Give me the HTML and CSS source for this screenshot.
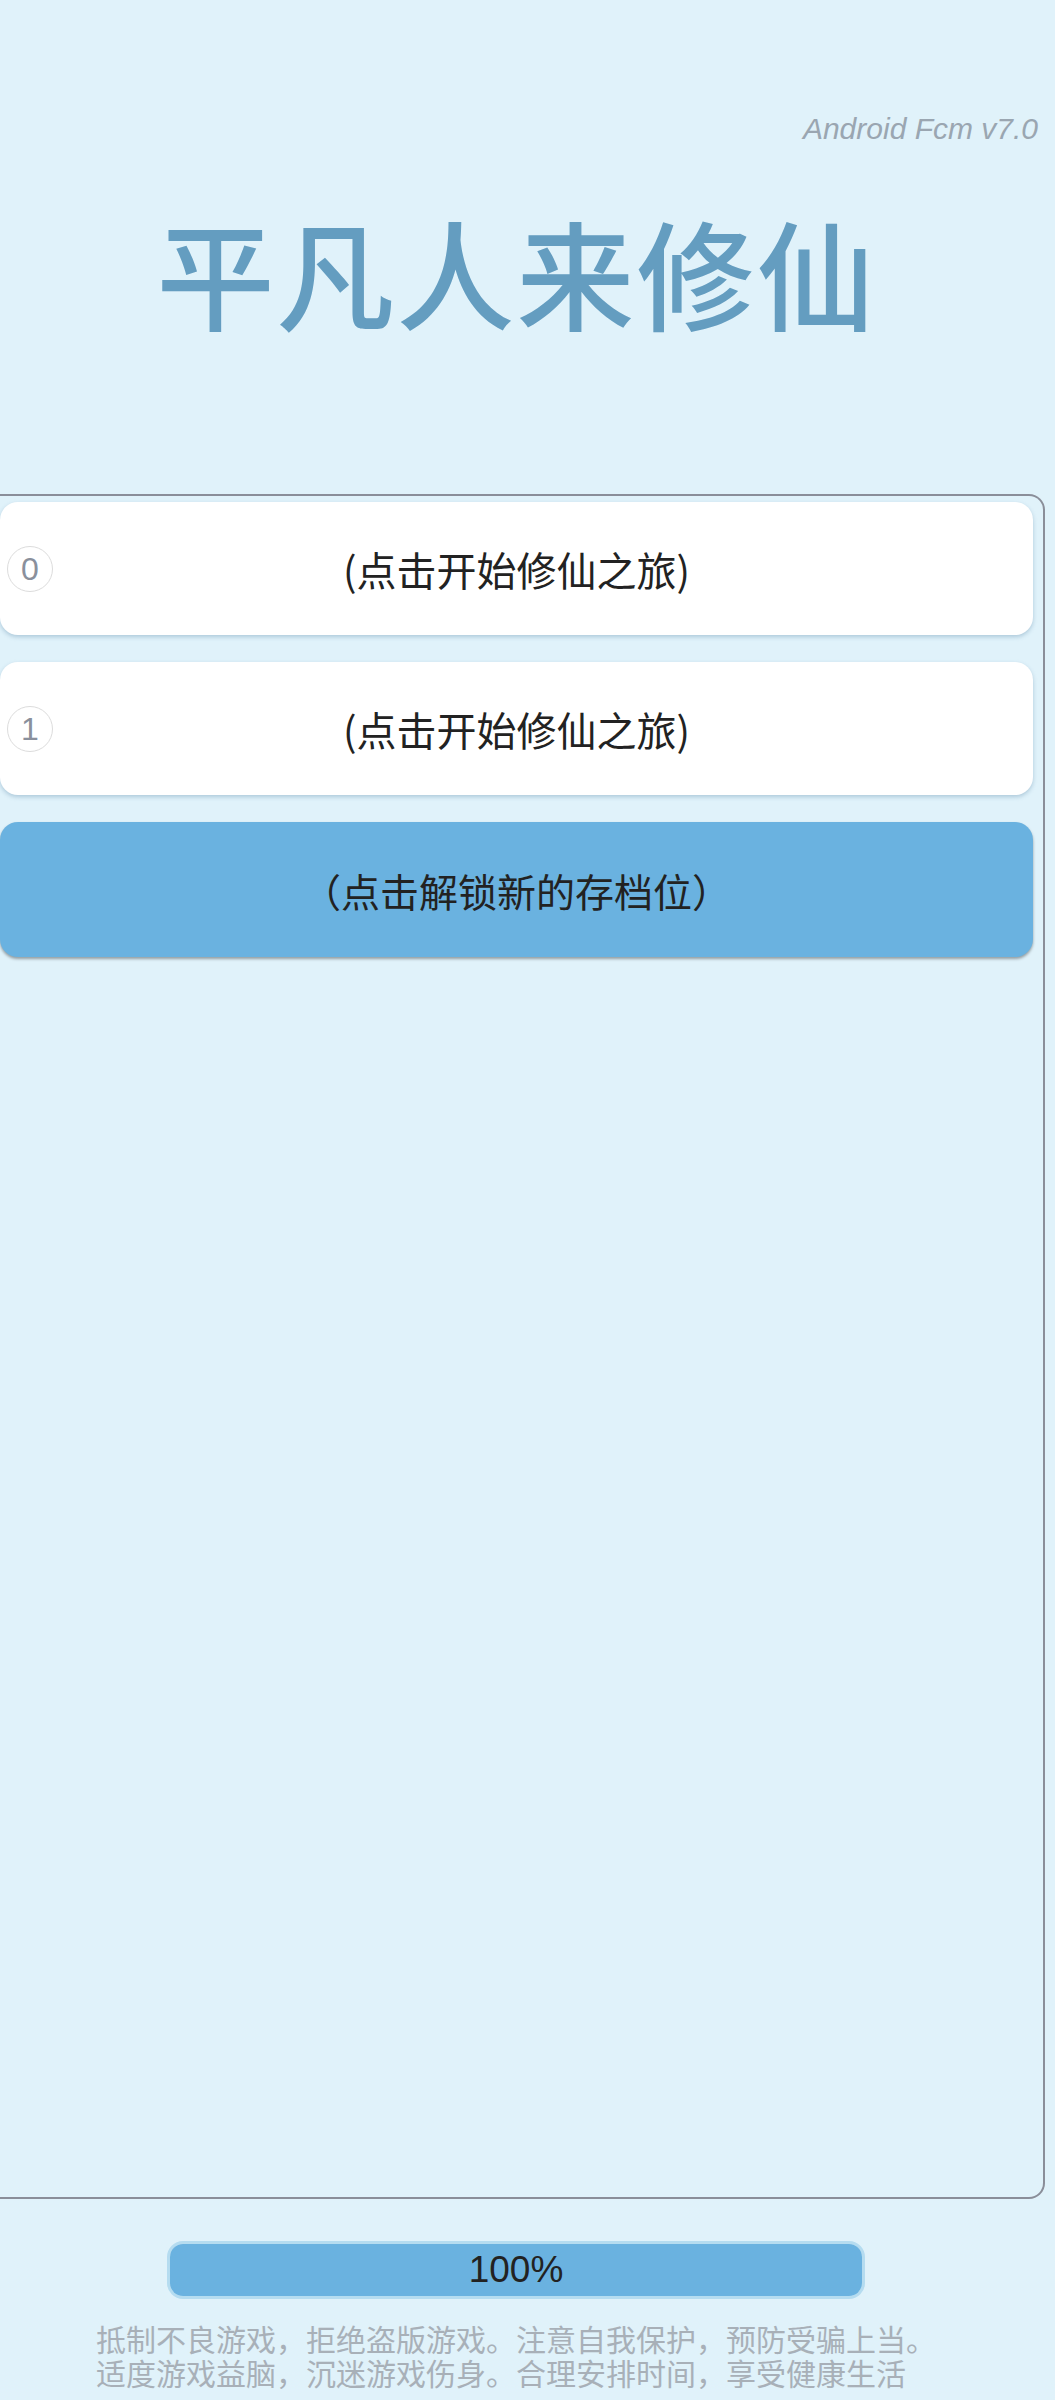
FILE: index.html
```html
<!DOCTYPE html>
<html lang="zh-CN">
<head>
  <meta charset="UTF-8" />
  <meta name="viewport" content="width=device-width, initial-scale=1.0"/>
  <title>平凡人来修仙</title>
  <link rel="stylesheet" href="styles.css">
</head>
<body>
  <div class="version">Android Fcm v7.0</div>

  <div class="screen">
    <h1 class="title">平凡人来修仙</h1>

    <div class="saves">
      <div class="slot">
        <span class="slot-num">0</span>
        <span class="slot-text">(点击开始修仙之旅)</span>
      </div>
      <div class="slot">
        <span class="slot-num">1</span>
        <span class="slot-text">(点击开始修仙之旅)</span>
      </div>
      <div class="slot unlock">
        <span class="slot-text">（点击解锁新的存档位）</span>
      </div>
    </div>

    <div class="progress">
      <div class="progress-fill" style="width: 100%"></div>
      <span class="progress-label">100%</span>
    </div>

    <p class="notice">
      抵制不良游戏，拒绝盗版游戏。注意自我保护，预防受骗上当。<br>
      适度游戏益脑，沉迷游戏伤身。合理安排时间，享受健康生活
    </p>
  </div>
</body>
</html>
```

FILE: styles.css
```css
body {
  margin: 0;
  background-color: #e0f2fa;
  font-family: "Noto Sans CJK SC", "Noto Sans", sans-serif;
  color: #222;
}

.version {
  padding-top: 109px;
  padding-right: 17px;
  text-align: right;
  font-family: "Liberation Sans", sans-serif;
  font-style: italic;
  font-size: 30px;
  line-height: 40px;
  color: #9aa6b1;
}

.screen {
  width: 1045px;
}

.title {
  margin: 47px 0 0;
  padding-right: 12px;
  text-align: center;
  font-size: 118px;
  line-height: 150px;
  font-weight: 500;
  color: #649dc0;
  letter-spacing: 2px;
}

.saves {
  margin-top: 148px;
  height: 1695px;
  padding: 6px 10px 0 0;
  border: 2px solid #8a8e99;
  border-left: none;
  border-radius: 0 16px 16px 0;
  display: flex;
  flex-direction: column;
  gap: 27px;
}

.slot {
  position: relative;
  height: 133px;
  display: flex;
  align-items: center;
  justify-content: center;
  background-color: #fff;
  border-radius: 18px;
  box-shadow: 0 2px 4px rgba(110, 150, 180, 0.45);
}

.slot-text {
  font-size: 40px;
  color: #222;
}

.slot-num {
  position: absolute;
  left: 7px;
  top: 44px;
  width: 44px;
  height: 44px;
  border: 1px solid #dcdcdc;
  border-radius: 50%;
  display: flex;
  align-items: center;
  justify-content: center;
  font-family: "Liberation Sans", sans-serif;
  font-size: 32px;
  color: #8a909c;
}

.unlock {
  height: 135px;
  background-color: #6ab2e0;
  box-shadow: 0 2px 3px rgba(0, 0, 0, 0.35);
}

.unlock .slot-text {
  font-size: 39px;
}

.progress {
  position: relative;
  width: 692px;
  height: 52px;
  margin: 42px 0 0 167px;
  border: 3px solid #b5dcf0;
  border-radius: 16px;
  overflow: hidden;
  display: flex;
  align-items: center;
  justify-content: center;
}

.progress-fill {
  position: absolute;
  left: 0;
  top: 0;
  bottom: 0;
  background-color: #6ab2e0;
}

.progress-label {
  position: relative;
  font-family: "Liberation Sans", sans-serif;
  font-size: 37px;
  color: #222;
}

.notice {
  margin: 22px 0 0 96px;
  font-size: 30px;
  line-height: 34px;
  color: #a8b0b8;
}
```
